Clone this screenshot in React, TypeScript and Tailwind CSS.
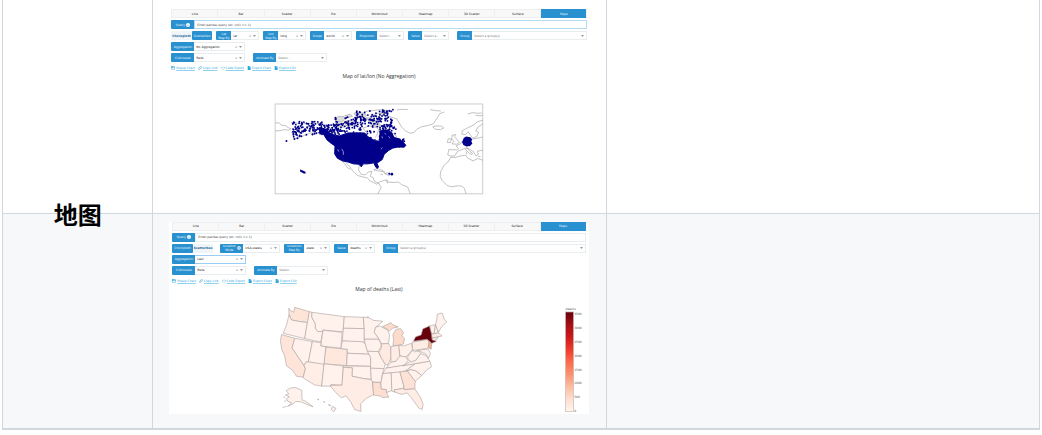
import React from 'react';
import { AppWindowIcon, CodeIcon, LinkIcon, GlobeIcon } from 'lucide-react';

type FieldProps = {
  label: string;
  value: string;
  className: string;
  labelClass?: string;
  clearable?: boolean;
  placeholder?: boolean;
  focused?: boolean;
  icon?: React.ReactNode;
};

const tabs = ['Line', 'Bar', 'Scatter', 'Pie', 'Wordcloud', 'Heatmap', '3D Scatter', 'Surface', 'Maps'];

const InfoDot = () => {
  return <svg className="h-[4px] w-[4px]" viewBox="0 0 12 12" aria-hidden="true">
      <circle cx="6" cy="6" r="6" fill="#fff" />
      <path d="M6 3V4M6 6V9" stroke="#2a91d1" strokeWidth="2" />
    </svg>;
};

const FileIcon = ({ className }: { className?: string; strokeWidth?: number }) => {
  return <svg className={className} viewBox="0 0 12 12" aria-hidden="true">
      <path d="M2 0H7V4H11V12H2ZM8 0L11 3H8Z" fill="currentColor" />
    </svg>;
};

const Field = ({ label, value, className, labelClass = 'w-[23px]', clearable, placeholder, focused, icon }: FieldProps) => {
  return <div className={`flex h-[9px] ${className}`}>
      <label className="flex min-w-0 flex-1">
        <span className={`flex shrink-0 items-center justify-center gap-px rounded-l-[1px] bg-[#2a91d1] text-center text-[#eef7fc] ${labelClass}`}>
          <span className="whitespace-pre-line">{label}</span>
          {icon}
        </span>
        <select className={`min-w-0 flex-1 appearance-none border-y pl-[2px] ${placeholder ? 'text-[#777]' : 'text-[#222]'} ${focused ? 'border-[#9ccdf5]' : 'border-[#e8edf0]'}`}>
          <option>{value}</option>
        </select>
      </label>
      <span className={`flex shrink-0 items-center gap-[2px] rounded-r-[1px] border border-l-0 pr-[2px] text-[#777] ${focused ? 'border-[#9ccdf5]' : 'border-[#e8edf0]'}`}>
        {clearable && <button type="button" aria-label={`Clear ${label}`}>×</button>}
        <svg className="h-[2px] w-[3px]" viewBox="0 0 6 4" aria-hidden="true">
          <path d="M0 0H6L3 4Z" fill="#999" />
        </svg>
      </span>
    </div>;
};

const MapToggle = ({ active }: { active: string }) => {
  return <div className="flex h-[9px] w-[41px] bg-[#f0f5f9]">
      {['Choropleth', 'ScatterGeo'].map(name => <button
          key={name}
          type="button"
          className={`min-w-0 flex-1 rounded-[1px] ${name === active ? 'bg-[#2a91d1] text-[#e2f1fa]' : 'font-semibold text-[#1a5f90]'}`}
        >
          {name}
        </button>)}
    </div>;
};

const links = [
  { name: 'Popup Chart', icon: AppWindowIcon },
  { name: 'Copy Link', icon: LinkIcon },
  { name: 'Code Export', icon: CodeIcon },
  { name: 'Export Chart', icon: FileIcon },
  { name: 'Export CSV', icon: FileIcon }
];

const ChartBuilder = ({ className, title, fields, aggregation, focusQuery, chart }: {
  className: string;
  title: string;
  fields: React.ReactNode;
  aggregation: string;
  focusQuery?: boolean;
  chart: React.ReactNode;
}) => {
  return <div className="bg-white font-['DejaVu_Sans',sans-serif] text-[3px] leading-[4px]">
      <div className={`flex flex-col gap-[2px] ${className}`}>
        <div className="flex h-[9px] border border-[#eeeeee] bg-[#f8f8f8]">
          {tabs.map(tab => <button
              key={tab}
              type="button"
              className={`-my-px flex-1 ${tab === 'Maps' ? '-mr-px bg-[#2a91d1] text-[#e2f1fa]' : 'border-r border-[#eeeeee] text-[#222]'}`}
            >
              {tab}
            </button>)}
        </div>
        <label className="flex h-[9px]">
          <span className="flex w-[23px] shrink-0 items-center justify-center gap-px rounded-l-[1px] bg-[#2a91d1] text-[#eef7fc]">
            Query <InfoDot />
          </span>
          <input
            type="text"
            placeholder="Enter pandas query (ex: col1 == 1)"
            className={`min-w-0 flex-1 border px-[2px] placeholder:text-[#444] ${focusQuery ? 'border-[#b4dcf3]' : 'border-[#e8eef0]'}`}
          />
        </label>
        <div className="flex">{fields}</div>
        <Field label="Aggregation" value={aggregation} className="w-[74px]" clearable focused={aggregation === 'Last'} />
        <div className="flex gap-2">
          <Field label="Colorscale" value="Reds" className="w-[74px]" clearable />
          <Field label="Animate By" value="Select..." className="w-[74px]" placeholder />
        </div>
        <div className="mt-[2px] flex gap-[3px] text-[#2ba5db]">
          {links.map(({ name, icon: Icon }) => <a key={name} href="#" className="flex items-center gap-px whitespace-nowrap">
              <Icon className="h-[4px] w-[4px]" strokeWidth={3} />
              <span className="underline decoration-[#8fd2ee]">{name}</span>
            </a>)}
        </div>
      </div>
      <h3 className="mt-[3px] text-center font-['Open_Sans',sans-serif] text-[5px] leading-[6px] text-[#333]">{title}</h3>
      {chart}
    </div>;
};

// fixed seed keeps the station cloud the same on each render
const scatter = (count: number, seed: number, x: number, y: number, w: number, h: number) => {
  let s = seed;
  const next = () => {
    s = (s * 16807) % 2147483647;
    return s / 2147483647;
  };
  return Array.from({ length: count }, () => [x + next() * w, y + next() * h]);
};

const stations = [
  ...scatter(120, 77, 84, 80, 90, 46).filter(([x, y]) => y < 142 - x * 0.16),
  ...scatter(70, 191, 165, 86, 60, 34),
  ...scatter(170, 42, 208, 66, 175, 52).filter(([x, y]) => !(x > 290 && x < 345 && y > 97)),
  ...scatter(55, 934, 265, 48, 110, 30),
  ...scatter(9, 51, 345, 44, 55, 8),
  ...scatter(45, 613, 345, 92, 50, 50),
  ...scatter(40, 2718, 375, 130, 46, 26),
  ...scatter(12, 87, 305, 108, 36, 28)
];

const coast = [
  'M31 84L44 84 50 91 62 92 70 98 79 101 72 106 60 104 46 107 31 108',
  'M79 83L110 86 165 86 190 90 215 92 240 98',
  'M79 112L92 120 104 127 90 132M104 127L118 122 135 115 160 112',
  'M300 50L330 46 350 44 375 47 360 54 336 56 318 62',
  'M296 99L304 112 318 123 330 130 337 121 342 104 336 98 314 93ZM350 104L364 100 378 110 392 120 402 136',
  'M345 55L365 62 382 67 397 72 404 84 412 97 424 109 438 115 448 113 457 103 470 96 489 92 506 87 512 78 519 68 526 56 540 51M397 45L412 43 430 44M497 44L514 47 530 48',
  'M505 96L515 93 532 94 538 99 528 104 513 103Z',
  'M233 199L241 208 249 219 257 224M243 203L253 213 267 231 279 242 293 246 308 249 317 259 326 263 336 268 342 264',
  'M284 208L282 226 290 239 302 240 312 231 322 230 317 244 326 249 329 259 341 265 346 261 358 257 367 255 370 262 393 263 402 262 412 270 430 277 437 297',
  'M342 265L350 278 345 287 340 297M366 257L369 266',
  'M327 225L338 221 350 225 361 232 346 229ZM360 236L371 234 381 238 373 242ZM348 238L355 239',
  'M655 76L640 80 626 91 611 98 594 107 592 118 603 119 612 111 619 122 626 130 637 125 643 112 634 108 641 96 655 87',
  'M563 121L574 119 570 125 578 134 585 143 577 148 563 147 568 139 562 132ZM551 132L561 132 558 143 549 143Z',
  'M594 137L588 147 575 153 582 161 579 165 553 164 550 180 560 184 571 183 580 169 596 163 608 158 615 168 624 175 622 179 613 174 603 163 611 160 627 170 635 183 642 178 639 169 655 166M655 126L640 130 622 133 608 134',
  'M641 184L649 186M605 170L608 179',
  'M559 187L573 188 584 184 604 181 610 190 626 198 640 191 655 196M559 187L551 201 540 210 529 229 527 244 533 257 547 271 560 276 580 273 593 274 600 281 605 297',
  'M610 57L625 53 640 55 652 54M634 61L648 63 655 60'
];

const arcticIslands = 'M208 72L222 64 238 65 245 72 232 80 214 79ZM238 80L258 76 270 82 262 92 244 92ZM268 55L290 52 306 60 298 70 276 66ZM304 68L324 70 342 84 350 92 340 97 322 90ZM240 62L256 58 264 64 250 68ZM212 84L232 84 240 94 222 97Z';

const WorldMap = () => {
  return <svg className="mt-4 block h-auto w-full" viewBox="-288 0 1260 315" role="img" aria-label="Map of stations">
      <rect x="31" y="27" width="624" height="270" fill="#fff" stroke="#ccc" strokeWidth="3" />
      <path d={coast.join('')} fill="none" stroke="#999" strokeWidth="1.8" strokeLinejoin="round" />
      <path d={arcticIslands} fill="#ddd" stroke="#aaa" strokeWidth="2" />
      <g fill="#00008b">
        <path d="M163 98L185 103 198 118 224 123 250 114 300 114 311 126 330 137 344 139 347 108 362 105 380 112 389 128 404 132 414 140 424 151 419 157 401 156 384 160 372 167 359 178 353 194 337 205 342 217 337 221 331 212 328 204 310 207 296 207 290 216 283 208 266 207 252 202 233 198 218 190 210 177 211 153 199 145 187 135 178 120 165 111Z" stroke="#00008b" strokeWidth="3" strokeLinejoin="round" />
        {stations.map(([x, y], i) => <circle key={i} cx={x} cy={y} r="2.8" />)}
        <path d="M106 224L114 227 122 231 123 236 117 236 106 230Z" />
        <circle cx="65" cy="138" r="3" />
        <circle cx="89" cy="132" r="3" />
        <circle cx="98" cy="130" r="3" />
        <circle cx="382" cy="238" r="4" />
        <circle cx="374" cy="237" r="3" />
        <path d="M598 129L605 125 618 127 623 133 621 140 624 146 617 153 606 155 597 150 593 142Z" />
      </g>
      <path d="M231 162L236 170 236 180M219 163L222 170M353 158L350 163M360 114L364 119M372 124L376 130M352 124L354 130" fill="none" stroke="#d5d5ed" strokeWidth="2" />
      <path d="M309 119L322 125 337 133" fill="none" stroke="#fff" strokeWidth="5" />
    </svg>;
};

const PALE = '#fff2ec';
const states = [
  { id: 'WA', fill: '#fee3d7', d: 'M57 31L62 37 72 43 75 28 119 41 114 74 85 70 65 66 58 50Z' },
  { id: 'OR', fill: PALE, d: 'M58 50L65 66 85 70 114 74 111 85 105 122 40 106 50 82Z' },
  { id: 'CA', fill: '#fee4d9', d: 'M35 110L75 121 67 150 103 203 107 213 100 238 80 235 69 218 50 204 45 175 36 155 32 130Z' },
  { id: 'NV', fill: PALE, d: 'M75 121L128 131 116 193 109 192 103 203 67 150Z' },
  { id: 'ID', fill: PALE, d: 'M119 41L127 43 126 57 137 78 137 91 145 101 160 98 153 133 105 122 111 85Z' },
  { id: 'MT', fill: PALE, d: 'M127 43L224 56 220 102 160 96 158 101 145 101 137 91 137 78 126 57Z' },
  { id: 'WY', fill: PALE, d: 'M160 97L217 103 214 151 153 144Z' },
  { id: 'UT', fill: PALE, d: 'M128 131L154 134 153 144 169 147 163 202 116 192Z' },
  { id: 'CO', fill: '#fee8de', d: 'M169 148L233 154 231 203 163 198Z' },
  { id: 'AZ', fill: '#ffeee6', d: 'M116 192L163 199 156 265 134 261 100 240 107 213 103 203 109 192Z' },
  { id: 'NM', fill: PALE, d: 'M163 198L221 204 217 262 184 260 183 265 156 265Z' },
  { id: 'ND', fill: PALE, d: 'M224 56L281 58 284 92 221 91Z' },
  { id: 'SD', fill: PALE, d: 'M221 91L284 92 284 133 218 129Z' },
  { id: 'NE', fill: PALE, d: 'M218 129L275 131 287 137 293 157 298 169 233 166 233 154 214 152Z' },
  { id: 'KS', fill: PALE, d: 'M233 166L298 169 303 178 303 205 231 203Z' },
  { id: 'OK', fill: PALE, d: 'M221 204L303 206 305 244 286 243 266 239 247 235 248 210 221 208Z' },
  { id: 'TX', fill: '#ffece4', d: 'M221 208L248 210 247 235 266 239 286 243 308 246 312 290 290 302 273 318 274 341 255 335 243 312 229 294 215 300 199 285 181 263 217 262Z' },
  { id: 'MN', fill: PALE, d: 'M281 58L298 59 311 67 340 70 318 88 314 103 329 124 284 124 284 92Z' },
  { id: 'IA', fill: PALE, d: 'M284 124L327 124 336 141 326 162 293 160 287 137Z' },
  { id: 'MO', fill: PALE, d: 'M293 160L326 161 335 180 347 199 343 213 303 211 303 178Z' },
  { id: 'AR', fill: PALE, d: 'M303 211L343 212 338 230 334 254 309 253 305 244Z' },
  { id: 'LA', fill: '#fddfd2', d: 'M309 253L334 254 335 273 352 276 351 286 358 298 340 299 329 294 312 292Z' },
  { id: 'WI', fill: PALE, d: 'M318 88L331 84 355 97 360 112 357 137 335 138 329 124 314 103Z' },
  { id: 'IL', fill: '#feeae1', d: 'M335 138L357 137 363 148 365 178 355 202 347 199 335 180 328 163 336 149Z' },
  { id: 'MI', fill: '#fddbcc', d: 'M370 143L372 128 370 110 380 94 393 92 402 104 397 114 405 121 402 138 388 142Z' },
  { id: 'MIU', fill: '#fddbcc', d: 'M339 86L352 80 364 74 369 80 386 87 369 91 360 99 355 95Z' },
  { id: 'IN', fill: '#ffede5', d: 'M364 146L388 142 391 178 379 190 364 194Z' },
  { id: 'OH', fill: '#fff0e9', d: 'M388 142L403 144 426 136 429 155 415 173 402 179 391 172Z' },
  { id: 'KY', fill: PALE, d: 'M349 211L365 193 379 190 391 174 410 178 416 188 404 203Z' },
  { id: 'TN', fill: PALE, d: 'M340 227L349 211 438 196 410 218 393 223Z' },
  { id: 'MS', fill: PALE, d: 'M340 227L365 225 367 278 352 284 350 275 335 273 334 254Z' },
  { id: 'AL', fill: PALE, d: 'M365 225L391 222 402 260 402 272 374 276 375 283 367 280Z' },
  { id: 'GA', fill: '#fde2d5', d: 'M391 222L414 220 437 250 436 273 404 275 402 260Z' },
  { id: 'FL', fill: '#ffede5', d: 'M375 276L402 272 404 276 436 273 453 299 461 319 458 335 448 331 428 303 413 285 397 290 376 283Z' },
  { id: 'SC', fill: PALE, d: 'M414 220L424 215 439 219 457 233 437 250Z' },
  { id: 'NC', fill: PALE, d: 'M409 219L438 197 481 190 486 207 471 217 457 233 439 219 424 215Z' },
  { id: 'VA', fill: PALE, d: 'M400 204L425 190 439 187 453 167 470 173 481 190 438 197Z' },
  { id: 'WV', fill: PALE, d: 'M415 175L429 157 435 162 450 158 453 167 439 187 425 192 415 184Z' },
  { id: 'MD', fill: PALE, d: 'M442 158L476 153 483 167 477 181 468 167 455 162Z' },
  { id: 'PA', fill: '#ffede5', d: 'M428 133L473 125 480 135 476 151 430 158Z' },
  { id: 'NJ', fill: '#fcb398', d: 'M478 132L487 136 485 154 476 149Z' },
  { id: 'VT', fill: PALE, d: 'M480 84L498 80 494 107 486 108Z' },
  { id: 'NH', fill: PALE, d: 'M498 80L507 104 494 108Z' },
  { id: 'MA', fill: '#ffece4', d: 'M486 109L507 105 518 114 488 121Z' },
  { id: 'CT', fill: '#ffece4', d: 'M488 121L506 117 503 124 489 130Z' },
  { id: 'ME', fill: PALE, d: 'M498 80L502 65 503 49 518 45 524 63 532 72 516 87 507 103Z' },
  { id: 'NY', fill: '#67000d', d: 'M432 130L438 117 455 111 460 93 480 84 486 108 488 126 501 130 487 136 473 124Z' },
  { id: 'AK', fill: PALE, d: 'M49 279L61 271 76 269 96 277 97 306 107 310 130 327 114 321 94 312 78 311 70 318 53 326 66 315 55 311 50 303 59 297 47 292 57 288Z' },
  { id: 'HI', fill: PALE, d: 'M188 326L199 332 192 342 185 336ZM177 320L183 323 178 324ZM161 311L166 314ZM143 304L148 306Z' }
];

const ticks = ['3500', '3000', '2500', '2000', '1500', '1000', '500', '0'];

const StatesMap = () => {
  return <svg className="mt-[6px] block h-auto w-full" viewBox="-303 0 1260 348" role="img" aria-label="Deaths by state">
      <defs>
        <linearGradient id="reds" x1="0" y1="0" x2="0" y2="1">
          <stop offset="0" stopColor="#67000d" />
          <stop offset="0.13" stopColor="#a50f15" />
          <stop offset="0.25" stopColor="#cb181d" />
          <stop offset="0.38" stopColor="#ef3b2c" />
          <stop offset="0.5" stopColor="#fb6a4a" />
          <stop offset="0.63" stopColor="#fc9272" />
          <stop offset="0.75" stopColor="#fcbba1" />
          <stop offset="0.88" stopColor="#fee0d2" />
          <stop offset="1" stopColor="#fff5f0" />
        </linearGradient>
      </defs>
      <g stroke="#aaa09d" strokeWidth="1.8" strokeLinejoin="round">
        {states.map(state => <path key={state.id} d={state.d} fill={state.fill} />)}
        <path d="M40 297L47 300M43 311L50 308M292 56L298 58M38 329L50 326" fill="none" />
      </g>
      <rect x="889" y="42" width="24" height="299" fill="url(#reds)" stroke="#c9b5b0" strokeWidth="2" />
      <g fill="#555" fontSize="9">
        <text x="889" y="35">deaths</text>
        {ticks.map((tick, i) => <text key={tick} x="915" y={50 + i * 42}>{tick}</text>)}
      </g>
    </svg>;
};

const App = () => {
  return <main className="px-[2px]">
      <table className="w-full table-fixed border-collapse border-x border-b-2 border-[#d0d7de]">
        <colgroup>
          <col className="w-[14.5%]" />
          <col className="w-[43.7%]" />
          <col />
        </colgroup>
        <tbody>
          <tr className="border-b border-[#d0d7de]">
            <th scope="rowgroup" className="relative border-r border-[#d0d7de] p-0">
              <span className="absolute inset-x-0 bottom-0 translate-y-1/2 pt-px text-center font-['Noto_Sans_CJK_SC',sans-serif] text-2xl font-bold text-black">地图</span>
            </th>
            <td className="border-r border-[#d0d7de] pt-2 pr-[17px] pb-[13px] pl-4 align-top">
              <ChartBuilder
                className="px-[2px] pt-px"
                title="Map of lat/lon (No Aggregation)"
                aggregation="No Aggregation"
                focusQuery
                fields={<div className="flex flex-1 gap-1">
                    <MapToggle active="ScatterGeo" />
                    <Field label={'Lat\nMap By'} value="lat" className="w-[43px]" labelClass="w-[15px]" clearable />
                    <Field label={'Lon\nMap By'} value="long" className="w-[43px]" labelClass="w-[15px]" clearable />
                    <Field label="Scope" value="world" className="w-[42px]" labelClass="w-[14px]" clearable />
                    <Field label="Projection" value="Select..." className="w-[48px]" labelClass="w-[21px]" placeholder />
                    <Field label="Value" value="Select a..." className="w-[41px]" labelClass="w-[14px]" placeholder />
                    <Field label="Group" value="Select a group(s)" className="ml-1 flex-1" labelClass="w-[15px]" placeholder />
                  </div>}
                chart={<WorldMap />}
              />
            </td>
            <td />
          </tr>
          <tr className="bg-[#f6f8fa]">
            <td className="border-r border-[#d0d7de]" />
            <td className="border-r border-[#d0d7de] pt-2 pr-[17px] pb-[14px] pl-4 align-top">
              <ChartBuilder
                className="px-[3px]"
                title="Map of deaths (Last)"
                aggregation="Last"
                fields={<div className="flex flex-1 gap-1">
                    <MapToggle active="Choropleth" />
                    <Field
                      label={'Location\nMode'}
                      value="USA-states"
                      className="ml-[3px] w-[60px]"
                      clearable
                      icon={<GlobeIcon className="h-[4px] w-[4px]" strokeWidth={3} />}
                    />
                    <Field label={'Locations\nMap By'} value="state" className="w-[46px]" labelClass="w-[20px]" clearable />
                    <Field label="Value" value="deaths" className="w-[41px]" labelClass="w-[14px]" clearable />
                    <Field label="Group" value="Select a group(s)" className="ml-1 flex-1" labelClass="w-[15px]" placeholder />
                  </div>}
                chart={<StatesMap />}
              />
            </td>
            <td />
          </tr>
        </tbody>
      </table>
    </main>;
};
export default App;
